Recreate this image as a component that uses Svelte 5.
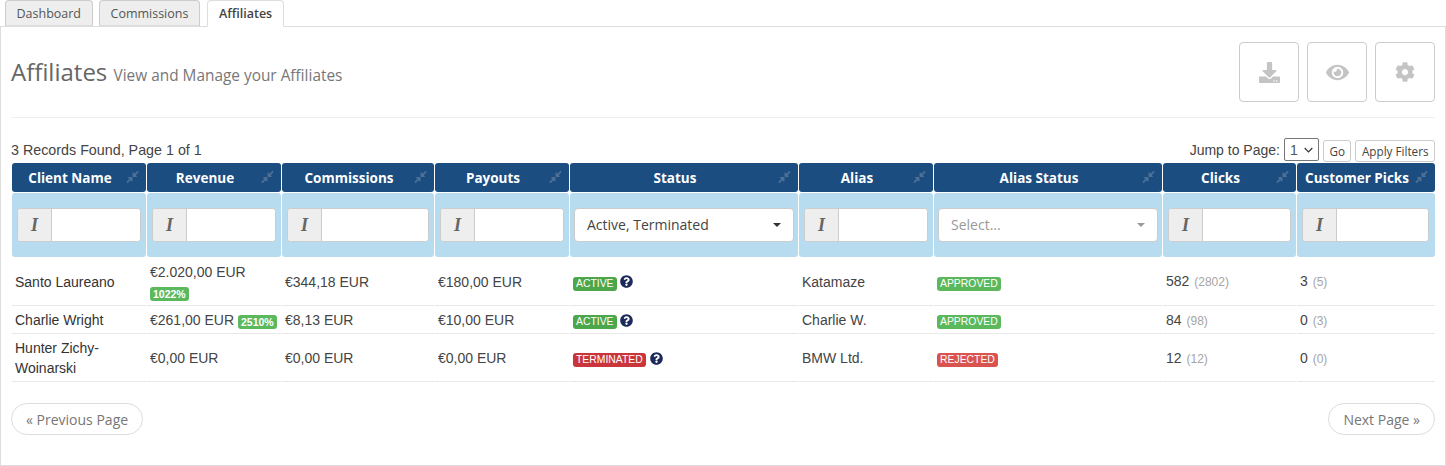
<script>
  const compress = 'M4.686 427.314L104 328l-32.922-31.029C55.958 281.851 66.666 256 88.048 256h112C213.303 256 224 266.745 224 280v112c0 21.382-25.803 32.09-40.922 16.971L152 376l-99.314 99.314c-6.248 6.248-16.379 6.248-22.627 0L4.686 449.941c-6.248-6.248-6.248-16.379 0-22.627zM443.314 84.686L344 184l32.922 31.029c15.12 15.12 4.412 40.971-16.97 40.971h-112C234.697 256 224 245.255 224 232V120c0-21.382 25.803-32.09 40.922-16.971L296 136l99.314-99.314c6.248-6.248 16.379-6.248 22.627 0l25.373 25.373c6.248 6.248 6.248 16.379 0 22.627z';
  const question = 'M504 256c0 136.997-111.043 248-248 248S8 392.997 8 256C8 119.083 119.043 8 256 8s248 111.083 248 248zM262.655 90c-54.497 0-89.255 22.957-116.549 63.758-3.536 5.286-2.353 12.415 2.715 16.258l34.699 26.31c5.205 3.947 12.621 3.008 16.665-2.122 17.864-22.658 30.113-35.797 57.303-35.797 20.429 0 45.698 13.148 45.698 32.958 0 14.976-12.363 22.667-32.534 33.976C247.128 238.528 216 254.941 216 296v4c0 6.627 5.373 12 12 12h56c6.627 0 12-5.373 12-12v-1.333c0-28.462 83.186-29.647 83.186-106.667 0-58.002-60.165-102-116.531-102zM256 338c-25.365 0-46 20.635-46 46 0 25.364 20.635 46 46 46s46-20.636 46-46c0-25.365-20.635-46-46-46z';

  const tabs = ['Dashboard', 'Commissions', 'Affiliates'];
  const columns = [
    { title: 'Client Name', width: 134 },
    { title: 'Revenue', width: 134 },
    { title: 'Commissions', width: 152 },
    { title: 'Payouts', width: 134 },
    { title: 'Status', width: 228, filter: 'status' },
    { title: 'Alias', width: 134 },
    { title: 'Alias Status', width: 228, filter: 'select' },
    { title: 'Clicks', width: 133 },
    { title: 'Customer Picks', width: 138 }
  ];
  const rows = [
    { name: 'Santo Laureano', revenue: '€2.020,00 EUR', pct: '1022%', stack: true, commissions: '€344,18 EUR', payouts: '€180,00 EUR', status: 'ACTIVE', alias: 'Katamaze', aliasStatus: 'APPROVED', clicks: '582', clicksAll: '(2802)', picks: '3', picksAll: '(5)', tall: true },
    { name: 'Charlie Wright', revenue: '€261,00 EUR', pct: '2510%', stack: false, commissions: '€8,13 EUR', payouts: '€10,00 EUR', status: 'ACTIVE', alias: 'Charlie W.', aliasStatus: 'APPROVED', clicks: '84', clicksAll: '(98)', picks: '0', picksAll: '(3)' },
    { name: 'Hunter Zichy-Woinarski', revenue: '€0,00 EUR', commissions: '€0,00 EUR', payouts: '€0,00 EUR', status: 'TERMINATED', alias: 'BMW Ltd.', aliasStatus: 'REJECTED', clicks: '12', clicksAll: '(12)', picks: '0', picksAll: '(0)', tall: true }
  ];
</script>

<div class="page">
  <nav class="tabs">
    {#each tabs as tab, i}
      <span class="tab" class:active={i === 2}>{tab}</span>
    {/each}
  </nav>

  <section class="panel">
    <header class="head">
      <h1>Affiliates <small>View and Manage your Affiliates</small></h1>
      <div class="tools">
        <button class="tool" aria-label="Export">
          <svg width="21" height="21" viewBox="0 0 512 512"><path d="M216 0h80c13.3 0 24 10.7 24 24v168h87.7c17.8 0 26.7 21.5 14.1 34.1L269.7 378.3c-7.5 7.5-19.8 7.5-27.3 0L90.1 226.1c-12.6-12.6-3.7-34.1 14.1-34.1H192V24c0-13.3 10.7-24 24-24zm296 376v112c0 13.3-10.7 24-24 24H24c-13.3 0-24-10.7-24-24V376c0-13.3 10.7-24 24-24h146.7l49 49c20.1 20.1 52.5 20.1 72.6 0l49-49H488c13.3 0 24 10.7 24 24zm-124 88c0-11-9-20-20-20s-20 9-20 20 9 20 20 20 20-9 20-20zm64 0c0-11-9-20-20-20s-20 9-20 20 9 20 20 20 20-9 20-20z" /></svg>
        </button>
        <button class="tool" aria-label="View">
          <svg width="23" height="21" viewBox="0 0 576 512"><path d="M572.52 241.4C518.29 135.59 410.93 64 288 64S57.68 135.64 3.48 241.41a32.35 32.35 0 0 0 0 29.19C57.71 376.41 165.07 448 288 448s230.32-71.64 284.52-177.41a32.35 32.35 0 0 0 0-29.19zM288 400a144 144 0 1 1 144-144 143.93 143.93 0 0 1-144 144zm0-240a95.31 95.31 0 0 0-25.31 3.79 47.85 47.85 0 0 1-66.9 66.9A95.78 95.78 0 1 0 288 160z" /></svg>
        </button>
        <button class="tool" aria-label="Settings">
          <svg width="20" height="20" viewBox="0 0 512 512"><path d="M487.4 315.7l-42.6-24.6c4.3-23.2 4.3-47 0-70.2l42.6-24.6c4.9-2.8 7.1-8.6 5.5-14-11.1-35.6-30-67.8-54.7-94.6-3.8-4.1-10-5.1-14.8-2.3L380.8 110c-17.9-15.4-38.5-27.3-60.8-35.1V25.8c0-5.6-3.9-10.5-9.4-11.7-36.7-8.2-74.3-7.8-109.2 0-5.5 1.2-9.4 6.1-9.4 11.7V75c-22.2 7.9-42.8 19.8-60.8 35.1L88.7 85.5c-4.9-2.8-11-1.9-14.8 2.3-24.7 26.7-43.6 58.9-54.7 94.6-1.7 5.4.6 11.2 5.5 14L67.3 221c-4.3 23.2-4.3 47 0 70.2l-42.6 24.6c-4.9 2.8-7.1 8.6-5.5 14 11.1 35.6 30 67.8 54.7 94.6 3.8 4.1 10 5.1 14.8 2.3l42.6-24.6c17.9 15.4 38.5 27.3 60.8 35.1v49.2c0 5.6 3.9 10.5 9.4 11.7 36.7 8.2 74.3 7.8 109.2 0 5.5-1.2 9.4-6.1 9.4-11.7v-49.2c22.2-7.9 42.8-19.8 60.8-35.1l42.6 24.6c4.9 2.8 11 1.9 14.8-2.3 24.7-26.7 43.6-58.9 54.7-94.6 1.5-5.5-.7-11.3-5.6-14.1zM256 336c-44.1 0-80-35.9-80-80s35.9-80 80-80 80 35.9 80 80-35.9 80-80 80z" /></svg>
        </button>
      </div>
    </header>

    <div class="meta">
      <span>3 Records Found, Page 1 of 1</span>
      <div class="jump">
        <span>Jump to Page:</span>
        <span class="page-select">1
          <svg width="9" height="6" viewBox="0 0 9 6"><path d="M.7 1l3.8 3.8L8.3 1" fill="none" stroke="#333" stroke-width="1.2" /></svg>
        </span>
        <button class="mini">Go</button>
        <button class="mini">Apply Filters</button>
      </div>
    </div>

    <table>
      <colgroup>
        {#each columns as col}
          <col style="width: {col.width}px" />
        {/each}
      </colgroup>
      <thead>
        <tr class="titles">
          {#each columns as col}
            <th>
              <span class="th-text">{col.title}</span>
              <svg class="pin" width="13" height="14" viewBox="0 0 448 512"><path d={compress} /></svg>
            </th>
          {/each}
        </tr>
        <tr class="filters">
          {#each columns as col}
            <td class:wide={col.filter}>
              {#if col.filter === 'status'}
                <div class="dropdown">Active, Terminated<i class="caret"></i></div>
              {:else if col.filter === 'select'}
                <div class="dropdown muted">Select...<i class="caret"></i></div>
              {:else}
                <div class="search"><span class="addon">I</span><span class="field"></span></div>
              {/if}
            </td>
          {/each}
        </tr>
      </thead>
      <tbody>
        {#each rows as row}
          <tr class:tall={row.tall}>
            <td><span class="name">{row.name}</span></td>
            <td class="revenue">
              {row.revenue}
              {#if row.pct}
                {#if row.stack}<br />{/if}
                <span class="pct">{row.pct}</span>
              {/if}
            </td>
            <td>{row.commissions}</td>
            <td>{row.payouts}</td>
            <td>
              <span class="label" class:red={row.status === 'TERMINATED'}>{row.status}</span>
              <svg class="help" width="13" height="13" viewBox="0 0 512 512"><path d={question} /></svg>
            </td>
            <td>{row.alias}</td>
            <td><span class="label alias" class:rejected={row.aliasStatus === 'REJECTED'}>{row.aliasStatus}</span></td>
            <td>{row.clicks} <span class="all">{row.clicksAll}</span></td>
            <td>{row.picks} <span class="all">{row.picksAll}</span></td>
          </tr>
        {/each}
      </tbody>
    </table>

    <footer class="pager">
      <button class="page-btn">« Previous Page</button>
      <button class="page-btn">Next Page »</button>
    </footer>
  </section>
</div>

<style>
  :global(body) {
    margin: 0;
    background: #fff;
  }

  .page {
    width: 1446px;
    height: 466px;
    box-sizing: border-box;
    display: flex;
    flex-direction: column;
    font-family: 'Liberation Sans', Arial, sans-serif;
    font-size: 14px;
    color: #333;
  }

  .tabs {
    display: flex;
    gap: 6px;
    height: 27px;
    padding-left: 5px;
    box-sizing: border-box;
    margin-bottom: -1px;
    position: relative;
    z-index: 1;
  }

  .tab {
    box-sizing: border-box;
    height: 26px;
    padding: 0 10.5px;
    border: 1px solid #ccc;
    border-bottom: 1px solid #ddd;
    border-radius: 4px 4px 0 0;
    background: #eee;
    font: 12.5px/26px 'Open Sans', sans-serif;
    color: #555;
  }

  .tab:nth-child(2) {
    padding: 0 11px;
  }

  .tab.active {
    height: 27px;
    margin-left: 1px;
    background: #fff;
    border-color: #ddd;
    border-bottom-color: #fff;
    font-weight: 600;
    color: #444;
  }

  .panel {
    flex: 1;
    border: 1px solid #ddd;
    padding: 0 10px;
    display: flex;
    flex-direction: column;
  }

  .head {
    display: flex;
    justify-content: space-between;
    align-items: flex-start;
    height: 91px;
    padding-top: 15px;
    box-sizing: border-box;
    border-bottom: 1px solid #eee;
  }

  h1 {
    margin: 14px 0 0;
    font: 400 24px/32px 'Open Sans', sans-serif;
    color: #666;
  }

  small {
    font-size: 15.4px;
    color: #777;
  }

  .tools {
    display: flex;
    gap: 8px;
  }

  .tool {
    width: 60px;
    height: 60px;
    padding: 0;
    display: flex;
    align-items: center;
    justify-content: center;
    background: #fff;
    border: 1px solid #ccc;
    border-radius: 4px;
  }

  .tool svg {
    fill: #c4c4c4;
  }

  .meta {
    display: flex;
    justify-content: space-between;
    align-items: flex-end;
    height: 44px;
    box-sizing: border-box;
    font-size: 14.3px;
    color: #444;
  }

  .meta > span {
    line-height: 20px;
    margin-bottom: 2px;
  }

  .jump {
    display: flex;
    align-items: flex-end;
    gap: 4px;
    font-size: 14px;
  }

  .jump > span:first-child {
    line-height: 20px;
    margin-bottom: 2px;
  }

  .page-select {
    box-sizing: border-box;
    width: 35px;
    height: 23px;
    margin-bottom: 1px;
    display: flex;
    align-items: center;
    justify-content: space-between;
    padding: 0 5px;
    border: 1px solid #767676;
    border-radius: 2px;
    color: #555;
  }

  .mini {
    height: 22px;
    padding: 0 5.5px;
    background: #fff;
    border: 1px solid #ccc;
    border-radius: 3px;
    font: 11.7px 'Open Sans', sans-serif;
    color: #444;
  }

  table {
    table-layout: fixed;
    width: 1425px;
    border-collapse: separate;
    border-spacing: 1px;
  }

  th {
    position: relative;
    height: 28px;
    padding: 1px 18px 0 0;
    background: #1b4d80;
    border-radius: 3px;
    font: 700 13.5px/28px 'Open Sans', sans-serif;
    color: #fff;
    text-align: center;
    white-space: nowrap;
  }

  .pin {
    position: absolute;
    right: 7px;
    top: 7px;
    fill: #4c7096;
  }

  .filters td {
    height: 64px;
    padding: 0 5px;
    box-sizing: border-box;
    background: #b7dbef;
    border-radius: 3px;
    border: 0;
  }

  .filters td.wide {
    padding: 0 4px;
  }

  .filters td:last-child {
    padding-right: 6px;
  }

  .search {
    display: flex;
    height: 34px;
    box-sizing: border-box;
    border: 1px solid #ccc;
    border-radius: 4px;
    background: #fff;
    overflow: hidden;
  }

  .addon {
    width: 33px;
    background: #eee;
    border-right: 1px solid #ccc;
    text-align: center;
    font: italic 700 18px/32px 'Liberation Serif', serif;
    color: #666;
  }

  .field {
    flex: 1;
    background: #fff;
  }

  .dropdown {
    position: relative;
    height: 34px;
    box-sizing: border-box;
    padding-left: 12px;
    border: 1px solid #ccc;
    border-radius: 4px;
    background: #fff;
    font: 14px/32px 'Open Sans', sans-serif;
    color: #444;
  }

  .dropdown.muted {
    color: #999;
  }

  .caret {
    position: absolute;
    right: 12px;
    top: 14px;
    border: 4px solid transparent;
    border-top-color: #333;
    border-bottom: 0;
  }

  .muted .caret {
    border-top-color: #999;
  }

  tbody td {
    height: 26px;
    padding: 0 3px;
    border-bottom: 1px solid #e8e8e8;
    line-height: 20px;
    color: #444;
    vertical-align: middle;
  }

  tbody tr.tall td {
    height: 46px;
  }

  tbody tr:first-child td {
    height: 47px;
  }

  .name {
    color: #333;
  }

  .revenue {
    white-space: nowrap;
  }

  .pct {
    display: inline-block;
    padding: 0 3px;
    height: 14px;
    background: #5cb85c;
    border-radius: 3px;
    font: 700 10.5px/14px 'Liberation Sans', sans-serif;
    color: #fff;
    vertical-align: top;
    margin-top: 5px;
  }

  .label {
    display: inline-block;
    height: 14px;
    padding: 0 3px;
    background: #4ca64c;
    border-radius: 3px;
    font: 10.4px/14px 'Liberation Sans', sans-serif;
    color: #fff;
    vertical-align: top;
    margin-top: 5px;
  }

  .label.red {
    background: #c9353a;
  }

  .label.alias {
    background: #5cb85c;
  }

  .label.alias.rejected {
    background: #d9534f;
  }

  .help {
    fill: #1d2a5c;
    vertical-align: top;
    margin-top: 3.5px;
  }

  .all {
    margin-left: 1px;
    font-size: 12px;
    color: #a5a5a5;
  }

  .pager {
    display: flex;
    justify-content: space-between;
    margin-top: 20px;
  }

  .page-btn {
    height: 32px;
    padding: 0 14px;
    background: #fff;
    border: 1px solid #ddd;
    border-radius: 16px;
    font: 14px 'Open Sans', sans-serif;
    color: #777;
  }
</style>
